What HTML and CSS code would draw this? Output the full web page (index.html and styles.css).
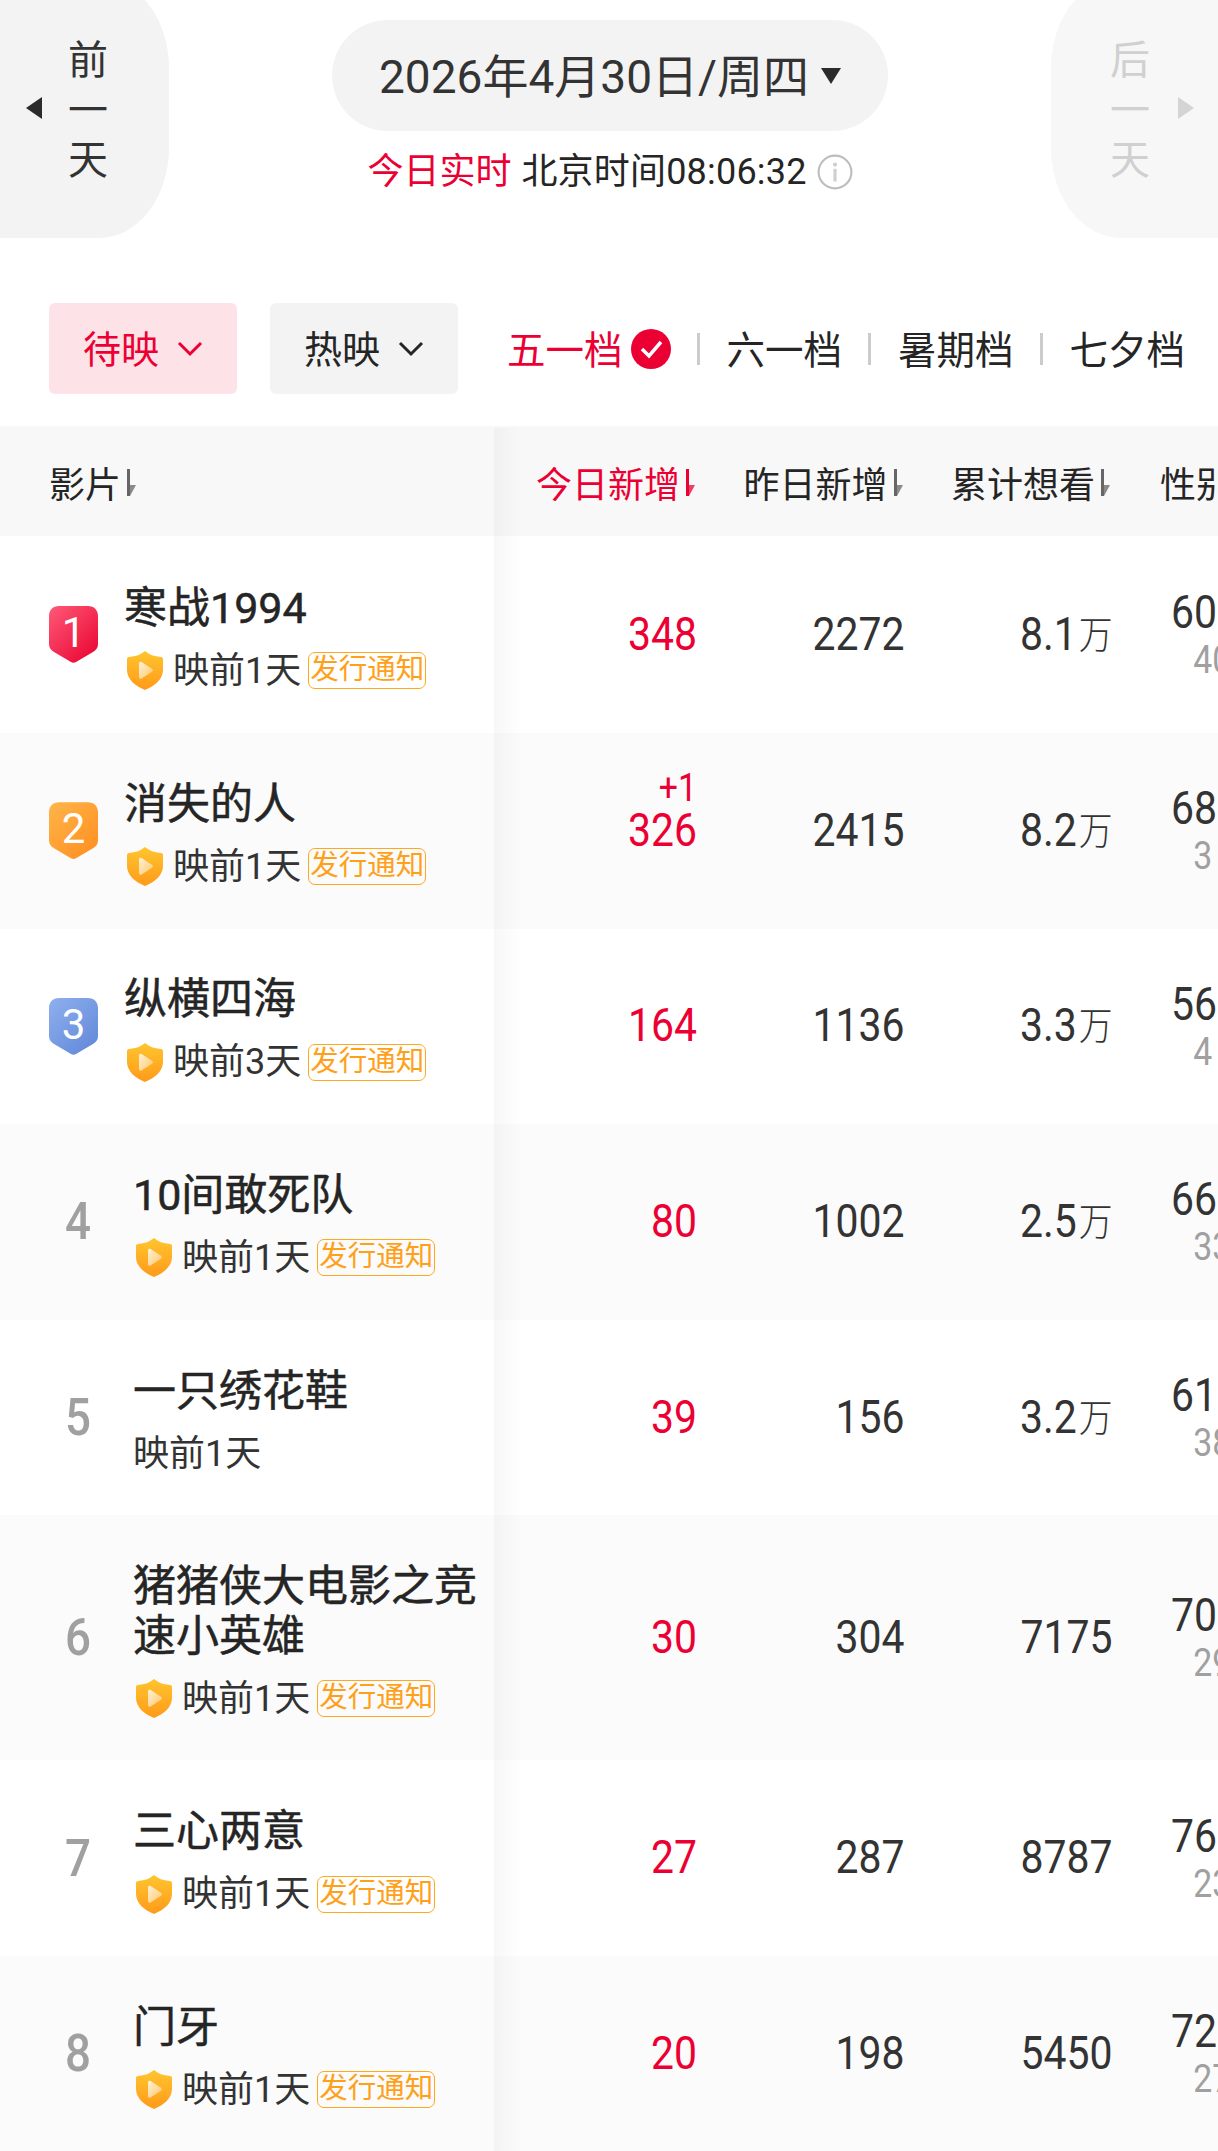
FILE: index.html
```html
<!DOCTYPE html>
<html>
	<head>
		<meta charset="UTF-8">
		<title>想看榜</title>
		<link rel="stylesheet" href="styles.css">
	</head>
	<body>
		<svg class="defs" width="0" height="0">
			<defs>
				<linearGradient id="shieldFill" x1="0" y1="0" x2="0" y2="1">
					<stop offset="0" stop-color="#ffc52e"/>
					<stop offset="1" stop-color="#ff9a1a"/>
				</linearGradient>
				<linearGradient id="playFill" x1="0" y1="0" x2="1" y2="1">
					<stop offset="0" stop-color="#fff2d8"/>
					<stop offset="1" stop-color="#ffc76a"/>
				</linearGradient>
				<symbol id="shield" viewBox="0 0 36 39">
					<path d="M18 0C22 3.500 27 5.500 34 6C35.500 6.100 36 7 36 8.500V19C36 28 28 35 18 39C8 35 0 28 0 19V8.500C0 7 .5 6.100 2 6C9 5.500 14 3.500 18 0Z" fill="url(#shieldFill)"/>
					<path d="M12 12.500C12 11 13.300 10.300 14.600 11.100L25 17.700C26.200 18.500 26.200 20 25 20.800L14.600 27.400C13.300 28.200 12 27.500 12 26Z" fill="url(#playFill)"/>
				</symbol>
				<symbol id="sort" viewBox="0 0 9 27">
					<path d="M0 0H3V27H0Z" fill="currentColor"/>
					<path d="M3 16H9L3 27Z" fill="currentColor" opacity=".75"/>
				</symbol>
			</defs>
		</svg>

		<div class="top">
			<div class="day-btn day-prev">
				<i class="tri tri-left"></i>
				<div class="day-text">前<br>一<br>天</div>
			</div>
			<div class="top-mid">
				<div class="date-pill"><span class="date-text">2026年4月30日/周四</span><i class="tri tri-down"></i></div>
				<div class="now">
					<span class="red">今日实时</span>
					<span class="now-time">北京时间08:06:32</span>
					<svg class="info" viewBox="0 0 34 34">
						<circle cx="17" cy="17" r="15.500" fill="none" stroke="#bdbdbd" stroke-width="2"/>
						<circle cx="17" cy="10" r="2" fill="#cfcfcf"/>
						<path d="M15.500 14H18.500V26H15.500Z" fill="#cfcfcf"/>
					</svg>
				</div>
			</div>
			<div class="day-btn day-next">
				<div class="day-text">后<br>一<br>天</div>
				<i class="tri tri-right"></i>
			</div>
		</div>

		<div class="filters">
			<div class="drop drop-on"><span class="lift">待映</span>
				<svg class="chev" viewBox="0 0 26 16"><path d="M2 2L13 13L24 2" fill="none" stroke="currentColor" stroke-width="3"/></svg>
			</div>
			<div class="drop"><span class="lift">热映</span>
				<svg class="chev" viewBox="0 0 26 16"><path d="M2 2L13 13L24 2" fill="none" stroke="currentColor" stroke-width="3"/></svg>
			</div>
			<div class="tabs">
				<span class="tab red">五一档</span>
				<svg class="check" viewBox="0 0 40 40">
					<circle cx="20" cy="20" r="20" fill="#ec0033"/>
					<path d="M11 20L18 27L30 13" fill="none" stroke="#fff" stroke-width="3.500"/>
				</svg>
				<i class="sep"></i>
				<span class="tab">六一档</span>
				<i class="sep"></i>
				<span class="tab">暑期档</span>
				<i class="sep"></i>
				<span class="tab">七夕档</span>
			</div>
		</div>

		<div class="table">
			<div class="row head">
				<div class="c-name"><span class="head-film">影片<svg class="sort"><use href="#sort"/></svg></span></div>
				<div class="c-num red">今日新增<svg class="sort"><use href="#sort"/></svg></div>
				<div class="c-num c-y">昨日新增<svg class="sort"><use href="#sort"/></svg></div>
				<div class="c-num c-t">累计想看<svg class="sort"><use href="#sort"/></svg></div>
				<div class="c-sex head-sex">性别</div>
			</div>

			<div class="row">
				<div class="c-name top3">
					<div class="badge badge1">1</div>
					<div class="film">
						<div class="film-title">寒战1994</div>
						<div class="film-sub"><svg class="shield"><use href="#shield"/></svg>映前1天<span class="tag">发行通知</span></div>
					</div>
				</div>
				<div class="c-num red num">348</div>
				<div class="c-num c-y num">2272</div>
				<div class="c-num c-t num">8.1<span class="wan">万</span></div>
				<div class="c-sex"><div class="sex-a">60</div><div class="sex-b">40</div></div>
			</div>

			<div class="row">
				<div class="c-name top3">
					<div class="badge badge2">2</div>
					<div class="film">
						<div class="film-title">消失的人</div>
						<div class="film-sub"><svg class="shield"><use href="#shield"/></svg>映前1天<span class="tag">发行通知</span></div>
					</div>
				</div>
				<div class="c-num red num has-up"><div class="up">+1</div>326</div>
				<div class="c-num c-y num">2415</div>
				<div class="c-num c-t num">8.2<span class="wan">万</span></div>
				<div class="c-sex"><div class="sex-a">68</div><div class="sex-b">3</div></div>
			</div>

			<div class="row">
				<div class="c-name top3">
					<div class="badge badge3">3</div>
					<div class="film">
						<div class="film-title">纵横四海</div>
						<div class="film-sub"><svg class="shield"><use href="#shield"/></svg>映前3天<span class="tag">发行通知</span></div>
					</div>
				</div>
				<div class="c-num red num">164</div>
				<div class="c-num c-y num">1136</div>
				<div class="c-num c-t num">3.3<span class="wan">万</span></div>
				<div class="c-sex"><div class="sex-a">56</div><div class="sex-b">4</div></div>
			</div>

			<div class="row">
				<div class="c-name">
					<div class="rank">4</div>
					<div class="film">
						<div class="film-title">10间敢死队</div>
						<div class="film-sub"><svg class="shield"><use href="#shield"/></svg>映前1天<span class="tag">发行通知</span></div>
					</div>
				</div>
				<div class="c-num red num">80</div>
				<div class="c-num c-y num">1002</div>
				<div class="c-num c-t num">2.5<span class="wan">万</span></div>
				<div class="c-sex"><div class="sex-a">66</div><div class="sex-b">33</div></div>
			</div>

			<div class="row">
				<div class="c-name">
					<div class="rank">5</div>
					<div class="film">
						<div class="film-title">一只绣花鞋</div>
						<div class="film-sub">映前1天</div>
					</div>
				</div>
				<div class="c-num red num">39</div>
				<div class="c-num c-y num">156</div>
				<div class="c-num c-t num">3.2<span class="wan">万</span></div>
				<div class="c-sex"><div class="sex-a">61</div><div class="sex-b">38</div></div>
			</div>

			<div class="row row-tall">
				<div class="c-name">
					<div class="rank">6</div>
					<div class="film">
						<div class="film-title">猪猪侠大电影之竞速小英雄</div>
						<div class="film-sub"><svg class="shield"><use href="#shield"/></svg>映前1天<span class="tag">发行通知</span></div>
					</div>
				</div>
				<div class="c-num red num">30</div>
				<div class="c-num c-y num">304</div>
				<div class="c-num c-t num">7175</div>
				<div class="c-sex"><div class="sex-a">70</div><div class="sex-b">29</div></div>
			</div>

			<div class="row">
				<div class="c-name">
					<div class="rank">7</div>
					<div class="film">
						<div class="film-title">三心两意</div>
						<div class="film-sub"><svg class="shield"><use href="#shield"/></svg>映前1天<span class="tag">发行通知</span></div>
					</div>
				</div>
				<div class="c-num red num">27</div>
				<div class="c-num c-y num">287</div>
				<div class="c-num c-t num">8787</div>
				<div class="c-sex"><div class="sex-a">76</div><div class="sex-b">23</div></div>
			</div>

			<div class="row">
				<div class="c-name">
					<div class="rank">8</div>
					<div class="film">
						<div class="film-title">门牙</div>
						<div class="film-sub"><svg class="shield"><use href="#shield"/></svg>映前1天<span class="tag">发行通知</span></div>
					</div>
				</div>
				<div class="c-num red num">20</div>
				<div class="c-num c-y num">198</div>
				<div class="c-num c-t num">5450</div>
				<div class="c-sex"><div class="sex-a">72</div><div class="sex-b">27</div></div>
			</div>
		</div>
	</body>
</html>
```

FILE: styles.css
```css
*{
	margin: 0;
	padding: 0;
	box-sizing: border-box;
}
html, body{
	height: 2151px;
	overflow: hidden;
}
body{
	width: 1218px;
	background: #fff;
	color: #252525;
	font-family: Roboto, "Noto Sans CJK SC", sans-serif;
}
.defs{
	display: block;
	height: 0;
}
.red{
	color: #ec0033;
}

/* top date bar */
.top{
	height: 238px;
	display: flex;
	justify-content: space-between;
}
.day-btn{
	height: 260px;
	margin-top: -22px;
	display: flex;
	align-items: center;
	background: #f3f3f3;
	color: #333;
}
.day-prev{
	width: 169px;
	padding-left: 26px;
	border-radius: 0 70px 70px 0 / 0 90px 90px 0;
}
.day-next{
	width: 167px;
	padding-left: 59px;
	background: #f7f7f7;
	color: #d0d0d0;
	border-radius: 70px 0 0 70px / 90px 0 0 90px;
}
.day-text{
	margin-top: 5px;
	font-size: 40px;
	line-height: 50px;
}
.day-prev .day-text{
	margin-left: 26px;
}
.day-next .day-text{
	margin-right: 28px;
}
.tri{
	display: block;
	width: 0;
	height: 0;
	border-style: solid;
	border-color: transparent;
}
.tri-left{
	border-width: 11px 16px 11px 0;
	border-right-color: #2b2b2b;
}
.tri-right{
	border-width: 11px 0 11px 16px;
	border-left-color: #d4d4d4;
}
.tri-down{
	margin-left: 12px;
	border-width: 16px 10px 0 10px;
	border-top-color: #2b2b2b;
}
.top-mid{
	display: flex;
	flex-direction: column;
	align-items: center;
	padding-top: 20px;
}
.date-pill{
	width: 556px;
	height: 111px;
	display: flex;
	align-items: center;
	justify-content: center;
	background: #f3f3f3;
	border-radius: 56px;
	color: #333;
}
.date-text{
	margin-bottom: 5px;
	font-size: 46px;
}
.now{
	margin-top: 16px;
	display: flex;
	align-items: center;
	font-size: 36px;
	line-height: 50px;
}
.now-time{
	margin-left: 10px;
	letter-spacing: .2px;
}
.info{
	width: 36px;
	height: 36px;
	margin-left: 10px;
}

/* filters */
.filters{
	margin-top: 65px;
	padding-left: 49px;
	display: flex;
	align-items: center;
	height: 91px;
}
.drop{
	width: 188px;
	height: 91px;
	margin-right: 33px;
	display: flex;
	align-items: center;
	justify-content: center;
	gap: 18px;
	background: #f3f3f3;
	border-radius: 6px;
	font-size: 38px;
}
.drop:last-of-type{
	width: 187px;
}
.drop-on{
	background: #fde3e8;
	color: #ec0033;
}
.lift{
	margin-bottom: 4px;
}
.chev{
	width: 26px;
	height: 16px;
}
.tabs{
	margin-left: 16px;
	display: flex;
	align-items: center;
	font-size: 38.500px;
}
.tab{
	margin-bottom: 4px;
	white-space: nowrap;
}
.check{
	width: 40px;
	height: 40px;
	margin-left: 8px;
}
.sep{
	display: block;
	width: 3px;
	height: 32px;
	margin: 0 27px 0 26px;
	background: #ccc;
}

/* table */
.table{
	margin-top: 32px;
}
.row{
	height: 195.600px;
	display: flex;
	align-items: center;
	background: #fff;
}
.row:nth-child(2){
	height: 197px;
}
.row:nth-child(odd){
	background: #fbfbfb;
}
.row-tall{
	height: 245px;
}
.row.head{
	height: 110px;
	padding-top: 2px;
	background: #f8f8f8;
	font-size: 36px;
}
.c-name{
	position: relative;
	width: 494px;
	height: 100%;
	flex: none;
	display: flex;
	align-items: center;
	padding-left: 63px;
	background: inherit;
}
.head .c-name{
	padding-left: 66px;
}
.c-name::after{
	content: "";
	position: absolute;
	left: 100%;
	top: 0;
	bottom: 0;
	width: 28px;
	background: linear-gradient(to right, rgba(0,0,0,.03), rgba(0,0,0,0));
}
.c-name.top3{
	padding-left: 49px;
}
.c-num{
	width: 203px;
	flex: none;
	display: flex;
	align-items: center;
	justify-content: flex-end;
	white-space: nowrap;
	color: #333;
}
.c-num.red{
	color: #ec0033;
}
.c-y{
	width: 207.500px;
}
.c-t{
	width: 207.500px;
}
.head .c-num{
	color: #252525;
}
.head .c-num.red{
	color: #ec0033;
}
/* 原图数字是窄体，没有对应字体，横向压一下 */
.num{
	margin-bottom: 2px;
	font-size: 46px;
	line-height: 50px;
	transform: scaleX(.89);
	transform-origin: right center;
}
.has-up{
	position: relative;
}
.up{
	position: absolute;
	right: 0;
	bottom: 52px;
	font-size: 38px;
	line-height: 30px;
}
.wan{
	margin-left: 2px;
	margin-bottom: 4px;
	font-family: "Noto Sans CJK SC", sans-serif;
	font-weight: 300;
	font-size: 38px;
}
.sort{
	width: 9px;
	height: 27px;
	margin-left: 6px;
	margin-right: 2px;
	color: #666;
}
.red .sort{
	color: #ec0033;
}
.head-film{
	display: flex;
	align-items: center;
	margin-left: -17px;
}
.c-sex{
	margin-left: 59px;
	margin-bottom: 2px;
	flex: none;
	white-space: nowrap;
	color: #333;
	transform: scaleX(.89);
	transform-origin: left center;
}
.c-sex.head-sex{
	margin-left: 48px;
	margin-bottom: 0;
	color: #252525;
	transform: none;
}
.sex-a{
	font-size: 46px;
	line-height: 50px;
}
.sex-b{
	margin-top: 3px;
	padding-left: 25px;
	font-size: 38px;
	line-height: 40px;
	color: #a0a0a0;
}

/* film cell */
.badge{
	width: 49px;
	height: 57px;
	flex: none;
	padding-top: 2px;
	text-align: center;
	font-size: 42px;
	line-height: 50px;
	color: #fff;
	clip-path: path("M10 0H39C45 0 49 4 49 10V38C49 42 47 44 44 46L27 56C25.500 57 23.500 57 22 56L5 46C2 44 0 42 0 38V10C0 4 4 0 10 0Z");
}
.badge1{
	background: linear-gradient(135deg, #ff5a78, #e8002f);
}
.badge2{
	background: linear-gradient(135deg, #ffb54a, #ff8d1e);
}
.badge3{
	background: linear-gradient(135deg, #8fb0ee, #5f86d8);
}
.rank{
	width: 30px;
	flex: none;
	text-align: center;
	font-weight: 500;
	font-size: 52px;
	color: #a0a0a0;
	transform: scaleX(.88);
}
.film{
	margin-left: 40px;
	width: 355px;
	padding-top: 4px;
}
.top3 .film{
	margin-left: 26px;
}
.film-title{
	font-size: 43px;
	line-height: 50px;
	-webkit-text-stroke: .5px currentColor;
	color: #252525;
}
.film-sub{
	margin-top: 18px;
	display: flex;
	align-items: center;
	font-size: 36px;
	line-height: 40px;
	color: #333;
}
.shield{
	width: 36px;
	height: 39px;
	margin-left: 3px;
	margin-right: 10px;
}
.tag{
	width: 118px;
	height: 37px;
	margin-left: 7px;
	border: 1.500px solid #ffa81c;
	border-radius: 7px;
	text-align: center;
	font-size: 28.500px;
	line-height: 33px;
	color: #ffa01a;
	white-space: nowrap;
}
```
